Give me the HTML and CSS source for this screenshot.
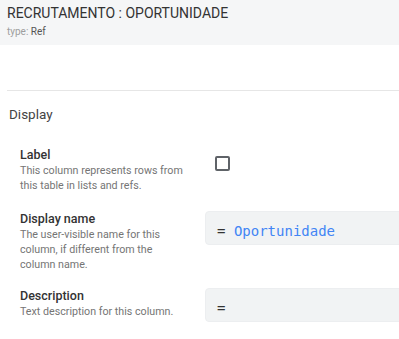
FILE: index.html
```html
<!DOCTYPE html>
<html lang="en">
<head>
  <meta charset="UTF-8" />
  <title>Column: Oportunidade</title>
  <link rel="stylesheet" href="styles.css">
</head>
<body>
  <header class="col-header">
    <div class="col-title">RECRUTAMENTO : OPORTUNIDADE</div>
    <div class="col-type">type: <span>Ref</span></div>
  </header>

  <main class="col-body">
    <hr class="divider">
    <h2 class="group-title">Display</h2>

    <!-- Label -->
    <div class="field field-label">
      <div class="field-info">
        <div class="field-name">Label</div>
        <div class="field-help">This column represents rows from this table in lists and refs.</div>
      </div>
      <div class="field-control">
        <span class="checkbox"></span>
      </div>
    </div>

    <!-- Display name -->
    <div class="field field-display">
      <div class="field-info">
        <div class="field-name">Display name</div>
        <div class="field-help">The user-visible name for this column, if different from the column name.</div>
      </div>
      <div class="field-control">
        <div class="expr"><span class="eq">=</span> <span class="expr-value">Oportunidade</span></div>
      </div>
    </div>

    <!-- Description -->
    <div class="field">
      <div class="field-info">
        <div class="field-name">Description</div>
        <div class="field-help">Text description for this column.</div>
      </div>
      <div class="field-control">
        <div class="expr"><span class="eq">=</span></div>
      </div>
    </div>
  </main>
</body>
</html>
```

FILE: styles.css
```css
:root {
  --header-bg: #f5f6f7;
  --fg: #3c4043;
  --muted: #757575;
  --line: #e6e6e6;
  --input-bg: #f1f3f4;
  --blue: #4285f4;
}

* {
  box-sizing: border-box;
}

body {
  margin: 0;
  font-family: Roboto, 'Noto Sans', sans-serif;
  color: var(--fg);
  background: #fff;
  overflow: hidden;
}

.col-header {
  background: var(--header-bg);
  height: 45px;
  padding: 4px 7px 0;
}

.col-title {
  font-size: 14px;
  line-height: 18px;
  color: #333;
}

.col-type {
  font-size: 10px;
  line-height: 14px;
  margin-top: 3px;
  color: #9e9e9e;
}

.col-type span {
  color: #555;
}

.col-body {
  padding: 0 0 0 7px;
}

.divider {
  border: none;
  border-top: 1px solid var(--line);
  margin: 45px 0 0;
}

.group-title {
  font-size: 13.5px;
  font-weight: 400;
  line-height: 18px;
  margin: 14px 0 0 2px;
  color: #444;
}

.field {
  display: flex;
  margin-top: 16px;
  padding-left: 13px;
}

.field-label {
  margin-top: 24px;
}

.field-display {
  margin-top: 18px;
}

.field-info {
  width: 185px;
  flex: none;
}

.field-name {
  font-size: 12.5px;
  font-weight: 500;
  line-height: 16px;
  color: #333;
}

.field-help {
  max-width: 166px;
  font-size: 10.7px;
  line-height: 15px;
  color: var(--muted);
}

.field-control {
  width: 300px;
  flex: none;
}

.checkbox {
  display: block;
  width: 15px;
  height: 15px;
  margin: 9px 0 0 10px;
  border: 2px solid #5f6368;
  border-radius: 2px;
}

.expr {
  background: var(--input-bg);
  border: 1px solid #eceef0;
  border-radius: 4px;
  height: 34px;
  padding: 10px 11px 0;
  font-family: 'DejaVu Sans Mono', 'Liberation Mono', monospace;
  font-size: 14px;
  line-height: 18px;
  color: #333;
}

.expr-value {
  color: var(--blue);
}
```
